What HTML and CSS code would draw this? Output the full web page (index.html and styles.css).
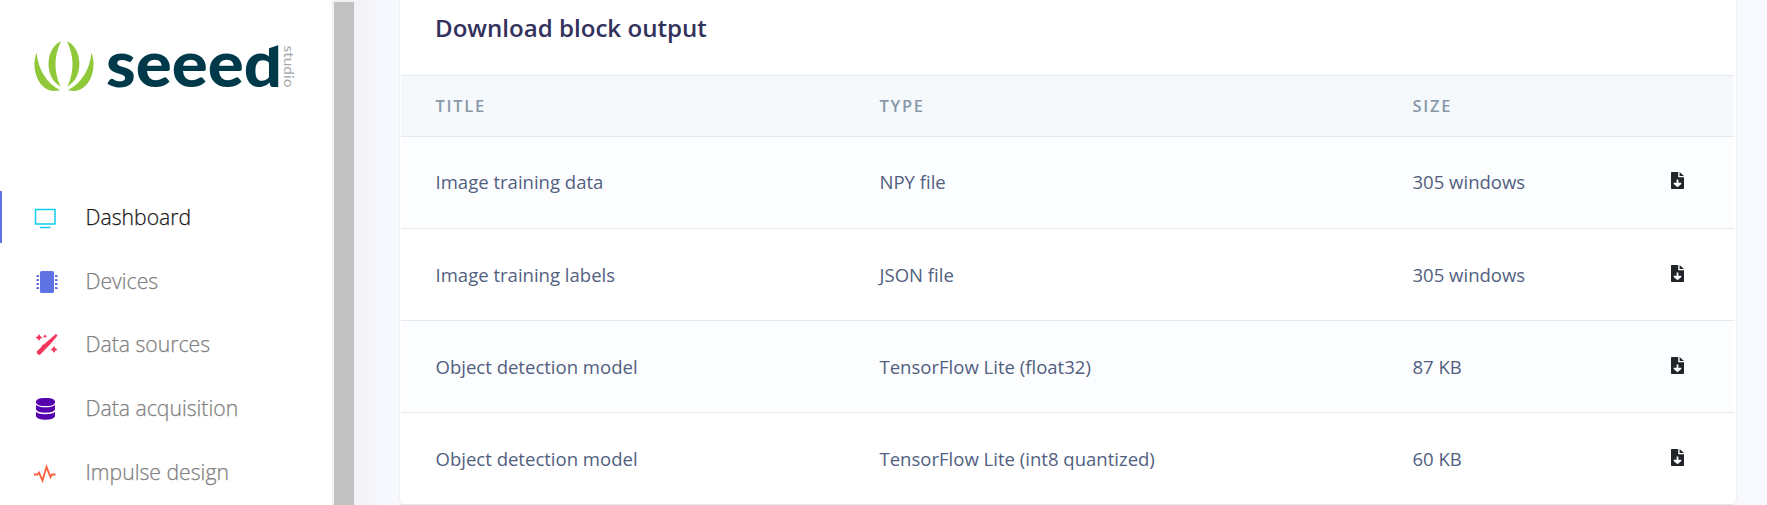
FILE: index.html
```html
<!DOCTYPE html>
<html lang="en">
<head>
<meta charset="utf-8">
<title>Dashboard</title>
<link rel="stylesheet" href="styles.css">
</head>
<body>
<svg class="defs" width="0" height="0">
  <symbol id="download" viewBox="0 0 13 17">
    <path fill="#212529" fill-rule="evenodd" d="M.8 0H7.2V5.2H13V16.3Q13 17 12.200 17H.8Q0 17 0 16.300V.8Q0 0 .8 0ZM5.600 7.500V10.700H2.700V12L6.500 15.300L10.300 12V10.700H7.400V7.500Z"/>
    <path fill="#212529" d="M8.600 0L13 4H8.600Z"/>
  </symbol>
</svg>
<div class="app">
  <aside class="sidebar">
    <svg class="logo" width="264" height="60" viewBox="0 0 264 60">
      <g fill="#8fc93a">
        <path d="M2.500 12.500C-4 31 6 51 20 51Q23 51 26 50.300C13 43 4.500 31 2.500 12.500Z"/>
        <path d="M27 1.300C11 8 10 38 26.500 46.500C19.500 31 20 16 27 1.300Z"/>
        <path d="M33 1.300C49 8 50 38 33.500 46.500C40.500 31 40 16 33 1.300Z"/>
        <path d="M57.500 12.500C64 31 54 51 40 51Q37 51 34 50.300C47 43 55.500 31 57.500 12.500Z"/>
      </g>
      <clipPath id="wordclip"><path d="M70 0H230V10L246 4.500V56H70Z"/></clipPath>
      <text class="wordmark" x="72" y="46.500" textLength="176" lengthAdjust="spacingAndGlyphs" clip-path="url(#wordclip)">seeed</text>
      <text class="studio" transform="translate(249.500 5.500) rotate(90)" x="0" y="0" textLength="42" lengthAdjust="spacingAndGlyphs">studio</text>
    </svg>
    <nav class="nav">
      <a class="item active"><svg class="icon" width="22" height="22"><path d="M1.500 2.500H21V17H1.500ZM6 20.500H16.500" fill="none" stroke="#11cdef" stroke-width="1.500"/></svg><span>Dashboard</span></a>
      <a class="item"><svg class="icon" width="24" height="22" fill="#5e72e4"><rect x="6" width="14" height="22" rx="1.500"/><path d="M3 4H5V6H3ZM3 8H5V10H3ZM3 12H5V14H3ZM3 16H5V18H3ZM21 4H23V6H21ZM21 8H23V10H21ZM21 12H23V14H21ZM21 16H23V18H21ZM2 4.700H5V5.700H2ZM2 8.700H5V9.700H2ZM2 12.700H5V13.700H2ZM2 16.700H5V17.700H2ZM21 4.700H24V5.700H21ZM21 8.700H24V9.700H21ZM21 12.700H24V13.700H21ZM21 16.700H24V17.700H21Z"/></svg><span>Devices</span></a>
      <a class="item"><svg class="icon" width="24" height="22" fill="#f5365c"><path d="M21.500.3Q22.300 0 23 .7Q23.600 1.300 23.200 2L16.200 10.300L6.300 20.500Q5.300 21.400 4.300 20.500L3 19.200Q2.200 18.300 3 17.300L8 12.300V10.800H9.500Z"/><path d="M5 0L6.300 2.200L8.500 3.500L6.300 4.800L5 7L3.700 4.800L1.500 3.500L3.700 2.200ZM11 .2L11.700 1.500L13 2.200L11.700 2.900L11 4.200L10.300 2.900L9 2.200L10.300 1.500ZM20 12L21.300 14.200L23.500 15.500L21.300 16.800L20 19L18.700 16.800L16.500 15.500L18.700 14.200Z"/></svg><span>Data sources</span></a>
      <a class="item"><svg class="icon" width="22" height="22" fill="#5603ad"><rect x="2" y="0" width="19" height="8" rx="7" ry="3.500"/><path d="M2 7Q5 9.300 11.500 9.300T21 7V11.500Q19 14.700 11.500 14.700T2 11.500ZM2 14Q5 16.200 11.500 16.200T21 14V18.500Q19 21.700 11.500 21.700T2 18.500Z"/></svg><span>Data acquisition</span></a>
      <a class="item"><svg class="icon" width="22" height="22"><path d="M0 12.500H3.500L5 10.500L8.500 18.500L12.500 5L16.500 15L18 12.500H21.500" fill="none" stroke="#fb6340" stroke-width="1.900"/></svg><span>Impulse design</span></a>
    </nav>
  </aside>
  <div class="scrollbar"><div class="thumb"></div></div>
  <main class="main">
    <section class="card">
      <h3 class="title">Download block output</h3>
      <div class="row head"><span>TITLE</span><span>TYPE</span><span>SIZE</span><span></span></div>
      <div class="row odd first"><span>Image training data</span><span>NPY file</span><span>305 windows</span><svg class="dl"><use href="#download"/></svg></div>
      <div class="row"><span>Image training labels</span><span>JSON file</span><span>305 windows</span><svg class="dl"><use href="#download"/></svg></div>
      <div class="row odd"><span>Object detection model</span><span>TensorFlow Lite (float32)</span><span>87 KB</span><svg class="dl"><use href="#download"/></svg></div>
      <div class="row"><span>Object detection model</span><span>TensorFlow Lite (int8 quantized)</span><span>60 KB</span><svg class="dl"><use href="#download"/></svg></div>
    </section>
  </main>
</div>
</body>
</html>
```
FILE: styles.css
```css
* { box-sizing: border-box; }
body { margin: 0; font-family: "Open Sans", sans-serif; background: #f8f9fe; overflow: hidden; }
.defs { display: block; height: 0; }
.app { display: flex; height: 505px; overflow: hidden; }
.sidebar { width: 332px; flex: none; background: #fff; padding-top: 40px; }
.logo { display: block; margin-left: 34px; overflow: visible; }
.wordmark { font: 900 65px Lato, sans-serif; fill: #003a4a; }
.studio { font: 400 14px Lato, sans-serif; fill: #a3a5a7; }
.nav { margin-top: 91px; display: flex; flex-direction: column; gap: 11.700px; }
.item { height: 52px; display: flex; align-items: center; padding-left: 32px; border-left: 2px solid transparent; color: #808080; font-size: 21.200px; font-weight: 340; -webkit-text-stroke: .25px currentColor; }
.item.active { border-color: #5e72e4; color: #1a1a1a; }
.icon { display: block; flex: none; margin: 2px 0 0; }
.item span { margin: -1px 0 0 29.500px; }
.icon[width="24"] + span { margin-left: 27.500px; }
.scrollbar { width: 22px; flex: none; background: #f1f1f1; padding: 2px 0 0 2px; }
.thumb { width: 20px; height: 503px; background: #c1c1c1; }
.main { flex: 1; padding-left: 45px; background: linear-gradient(90deg, #f1f1f6, #f6f7fc 22px, #f8f9fe 45px); }
.card { width: 1338px; height: 505px; background: #fff; border: solid #eeeff3; border-width: 0 1px 1px; border-radius: 0 0 7px 7px; padding: 0 2px 0 1px; }
.title { margin: 0; height: 75px; padding: 11px 0 0 34px; font-size: 24.100px; line-height: 34px; font-weight: 570; color: #32325d; }
.row { height: 92px; display: grid; grid-template-columns: 444px 533px 258.500px 13px; align-items: center; padding: 0 0 1px 34.500px; border-bottom: 1px solid #e6eaee; font-size: 18.550px; color: #525f7f; }
.row.first { padding-bottom: 2px; }
.row.head { height: 62px; border-top: 1px solid #e6eaee; background: #f6f9fc; color: #8898aa; font-size: 16.500px; font-weight: 600; letter-spacing: 1.700px; padding-bottom: 2px; }
.odd { background: #fcfdff; }
.dl { width: 13px; height: 17px; margin-top: -2px; }
```
